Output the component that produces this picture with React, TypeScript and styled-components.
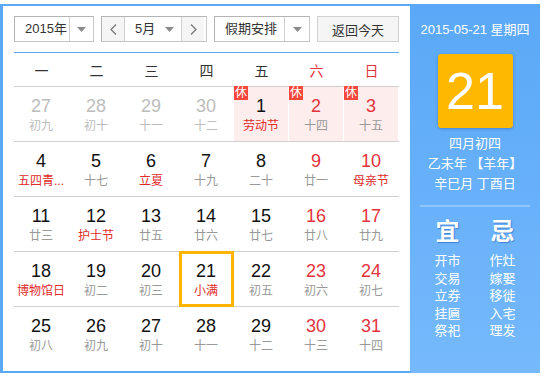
import React from "react";
import styled, { createGlobalStyle } from "styled-components";

const BLUE = "#5ba8f5";
const RED = "#e3333d";
const FEST = "#e02a2a";

const Global = createGlobalStyle`
  html, body { margin: 0; padding: 0; background: #fff; }
  body { font-family: "Liberation Sans", "Noto Sans CJK SC", sans-serif; }
`;

const Page = styled.div`
  padding-top: 4px;
`;

const Calendar = styled.div`
  display: flex;
  width: 540px;
  height: 369px;
`;

const LeftPane = styled.div`
  box-sizing: border-box;
  width: 410px;
  border: 2px solid ${BLUE};
  border-left-width: 3px;
  border-right: none;
  padding: 10px 11px 10px 11px;
  display: flex;
  flex-direction: column;
`;

const Toolbar = styled.div`
  display: flex;
  gap: 7px;
  height: 26px;
`;

const Box = styled.div<{ $w: number }>`
  box-sizing: border-box;
  width: ${(p) => p.$w}px;
  height: 26px;
  border: 1px solid #b4b4b4;
  border-right-color: #c8c8c8;
  border-bottom-color: #c4c4c4;
  display: flex;
  background: #fff;
  font-size: 13px;
  color: #333;
`;

const Label = styled.div<{ $w: number }>`
  width: ${(p) => p.$w}px;
  padding-left: 10px;
  box-sizing: border-box;
  line-height: 24px;
  white-space: nowrap;
`;

const ArrowCell = styled.div`
  flex: 1;
  border-left: 1px solid #d0d0d0;
  display: flex;
  align-items: center;
  justify-content: center;
`;

const NavButton = styled.div`
  width: 22px;
  background: #f5f5f5;
  display: flex;
  align-items: center;
  justify-content: center;
`;

const MonthSelect = styled.div`
  width: 58px;
  border-left: 1px solid #d0d0d0;
  border-right: 1px solid #d0d0d0;
  display: flex;
  align-items: center;
  justify-content: space-between;
  padding: 0 7px 0 10px;
  box-sizing: border-box;
  line-height: 24px;
`;

const TodayButton = styled.div`
  box-sizing: border-box;
  margin-left: auto;
  width: 82px;
  height: 26px;
  border: 1px solid #d2d2d2;
  background: #f5f5f5;
  font-size: 13px;
  color: #333;
  display: flex;
  align-items: center;
  justify-content: center;
`;

const BlueLine = styled.div`
  margin-top: 10px;
  height: 1px;
  background: ${BLUE};
`;

const WeekHeader = styled.div`
  display: grid;
  grid-template-columns: repeat(7, 55px);
  height: 33px;
`;

const WeekDay = styled.div<{ $red?: boolean }>`
  display: flex;
  align-items: center;
  justify-content: center;
  font-size: 14px;
  color: ${(p) => (p.$red ? RED : "#333")};
`;

const WeekRow = styled.div`
  display: grid;
  grid-template-columns: repeat(7, 55px);
  border-top: 1px solid #cfcfcf;
  height: 54px;
`;

const Cell = styled.div<{ $holiday?: boolean; $today?: boolean }>`
  position: relative;
  display: flex;
  flex-direction: column;
  align-items: center;
  padding-top: 9px;
  box-sizing: border-box;
  background: ${(p) => (p.$holiday ? "#fdeded" : "transparent")};
  border-right: 1px solid ${(p) => (p.$holiday ? "#fff" : "transparent")};
  &::after {
    content: "";
    display: ${(p) => (p.$today ? "block" : "none")};
    position: absolute;
    top: -1px;
    bottom: -1px;
    left: 0;
    right: -1px;
    border: 3px solid #ffb400;
  }
`;

const DayNum = styled.div<{ $tone: "normal" | "red" | "other" }>`
  font-size: 18px;
  line-height: 20px;
  color: ${(p) => (p.$tone === "red" ? RED : p.$tone === "other" ? "#bdbdbd" : "#111")};
`;

const Lunar = styled.div<{ $tone: "normal" | "fest" | "other" }>`
  margin-top: 2px;
  font-size: 12px;
  line-height: 16px;
  white-space: nowrap;
  color: ${(p) => (p.$tone === "fest" ? FEST : p.$tone === "other" ? "#bdbdbd" : "#999")};
`;

const RestBadge = styled.div`
  position: absolute;
  top: -1px;
  left: 0;
  width: 14px;
  height: 14px;
  background: #f5473b;
  color: #fff;
  font-size: 12px;
  line-height: 14px;
  text-align: center;
`;

const RightPanel = styled.div`
  width: 130px;
  background: linear-gradient(180deg, #5aa8f7 0%, #6ab2fa 60%, #76b9fc 100%);
  display: flex;
  flex-direction: column;
  align-items: center;
  color: #fff;
  padding-top: 18px;
  box-sizing: border-box;
`;

const DateLine = styled.div`
  font-size: 13px;
  line-height: 16px;
  white-space: nowrap;
`;

const BigDay = styled.div`
  margin-top: 16px;
  width: 75px;
  height: 74px;
  border-radius: 3px;
  background: #ffb800;
  box-shadow: 0 1px 3px rgba(0, 60, 140, 0.35);
  display: flex;
  align-items: center;
  justify-content: center;
  font-size: 52px;
  line-height: 1;
`;

const InfoLines = styled.div`
  margin-top: 6px;
  font-size: 13px;
  line-height: 20px;
  text-align: center;
  white-space: nowrap;
`;

const Divider = styled.div`
  margin-top: 11px;
  width: 110px;
  height: 2px;
  background: #8fc6fb;
`;

const Almanac = styled.div`
  margin-top: 11px;
  display: grid;
  grid-template-columns: 55px 55px;
`;

const AlmanacCol = styled.div`
  display: flex;
  flex-direction: column;
  align-items: center;
`;

const AlmanacTitle = styled.div`
  font-size: 24px;
  line-height: 28px;
  font-weight: bold;
  text-shadow: 1px 1px 1px rgba(30, 90, 180, 0.55);
  margin-bottom: 6px;
`;

const AlmanacItem = styled.div`
  font-size: 13px;
  line-height: 17.6px;
`;

const DownArrow = () => (
  <svg width="9" height="5" viewBox="0 0 9 5">
    <path d="M0 0 H9 L4.5 5 Z" fill="#8a8a8a" />
  </svg>
);

const Chevron = ({ dir }: { dir: "l" | "r" }) => (
  <svg width="7" height="11" viewBox="0 0 7 11">
    <path
      d={dir === "l" ? "M6 0.5 L1 5.5 L6 10.5" : "M1 0.5 L6 5.5 L1 10.5"}
      fill="none"
      stroke="#7a7a7a"
      strokeWidth="1.3"
    />
  </svg>
);

type Day = {
  n: number;
  l: string;
  num?: "normal" | "red" | "other";
  lun?: "normal" | "fest" | "other";
  rest?: boolean;
  today?: boolean;
};

const weeks: Day[][] = [
  [
    { n: 27, l: "初九", num: "other", lun: "other" },
    { n: 28, l: "初十", num: "other", lun: "other" },
    { n: 29, l: "十一", num: "other", lun: "other" },
    { n: 30, l: "十二", num: "other", lun: "other" },
    { n: 1, l: "劳动节", lun: "fest", rest: true },
    { n: 2, l: "十四", num: "red", rest: true },
    { n: 3, l: "十五", num: "red", rest: true },
  ],
  [
    { n: 4, l: "五四青...", lun: "fest" },
    { n: 5, l: "十七" },
    { n: 6, l: "立夏", lun: "fest" },
    { n: 7, l: "十九" },
    { n: 8, l: "二十" },
    { n: 9, l: "廿一", num: "red" },
    { n: 10, l: "母亲节", num: "red", lun: "fest" },
  ],
  [
    { n: 11, l: "廿三" },
    { n: 12, l: "护士节", lun: "fest" },
    { n: 13, l: "廿五" },
    { n: 14, l: "廿六" },
    { n: 15, l: "廿七" },
    { n: 16, l: "廿八", num: "red" },
    { n: 17, l: "廿九", num: "red" },
  ],
  [
    { n: 18, l: "博物馆日", lun: "fest" },
    { n: 19, l: "初二" },
    { n: 20, l: "初三" },
    { n: 21, l: "小满", lun: "fest", today: true },
    { n: 22, l: "初五" },
    { n: 23, l: "初六", num: "red" },
    { n: 24, l: "初七", num: "red" },
  ],
  [
    { n: 25, l: "初八" },
    { n: 26, l: "初九" },
    { n: 27, l: "初十" },
    { n: 28, l: "十一" },
    { n: 29, l: "十二" },
    { n: 30, l: "十三", num: "red" },
    { n: 31, l: "十四", num: "red" },
  ],
];

const weekNames = ["一", "二", "三", "四", "五", "六", "日"];
const yi = ["开市", "交易", "立券", "挂匾", "祭祀"];
const ji = ["作灶", "嫁娶", "移徙", "入宅", "理发"];

export default function App() {
  return (
    <Page>
      <Global />
      <Calendar>
        <LeftPane>
          <Toolbar>
            <Box $w={80}>
              <Label $w={54}>2015年</Label>
              <ArrowCell>
                <DownArrow />
              </ArrowCell>
            </Box>
            <Box $w={106}>
              <NavButton>
                <Chevron dir="l" />
              </NavButton>
              <MonthSelect>
                <span>5月</span>
                <DownArrow />
              </MonthSelect>
              <NavButton>
                <Chevron dir="r" />
              </NavButton>
            </Box>
            <Box $w={96}>
              <Label $w={69}>假期安排</Label>
              <ArrowCell>
                <DownArrow />
              </ArrowCell>
            </Box>
            <TodayButton>返回今天</TodayButton>
          </Toolbar>
          <BlueLine />
          <WeekHeader>
            {weekNames.map((w, i) => (
              <WeekDay key={w} $red={i >= 5}>
                {w}
              </WeekDay>
            ))}
          </WeekHeader>
          {weeks.map((week, wi) => (
            <WeekRow key={wi}>
              {week.map((d, di) => (
                <Cell key={di} $holiday={d.rest} $today={d.today}>
                  {d.rest && <RestBadge>休</RestBadge>}
                  <DayNum $tone={d.num ?? "normal"}>{d.n}</DayNum>
                  <Lunar $tone={d.lun ?? "normal"}>{d.l}</Lunar>
                </Cell>
              ))}
            </WeekRow>
          ))}
        </LeftPane>
        <RightPanel>
          <DateLine>2015-05-21 星期四</DateLine>
          <BigDay>21</BigDay>
          <InfoLines>
            <div>四月初四</div>
            <div>乙未年 【羊年】</div>
            <div>辛巳月 丁酉日</div>
          </InfoLines>
          <Divider />
          <Almanac>
            <AlmanacCol>
              <AlmanacTitle>宜</AlmanacTitle>
              {yi.map((t) => (
                <AlmanacItem key={t}>{t}</AlmanacItem>
              ))}
            </AlmanacCol>
            <AlmanacCol>
              <AlmanacTitle>忌</AlmanacTitle>
              {ji.map((t) => (
                <AlmanacItem key={t}>{t}</AlmanacItem>
              ))}
            </AlmanacCol>
          </Almanac>
        </RightPanel>
      </Calendar>
    </Page>
  );
}
